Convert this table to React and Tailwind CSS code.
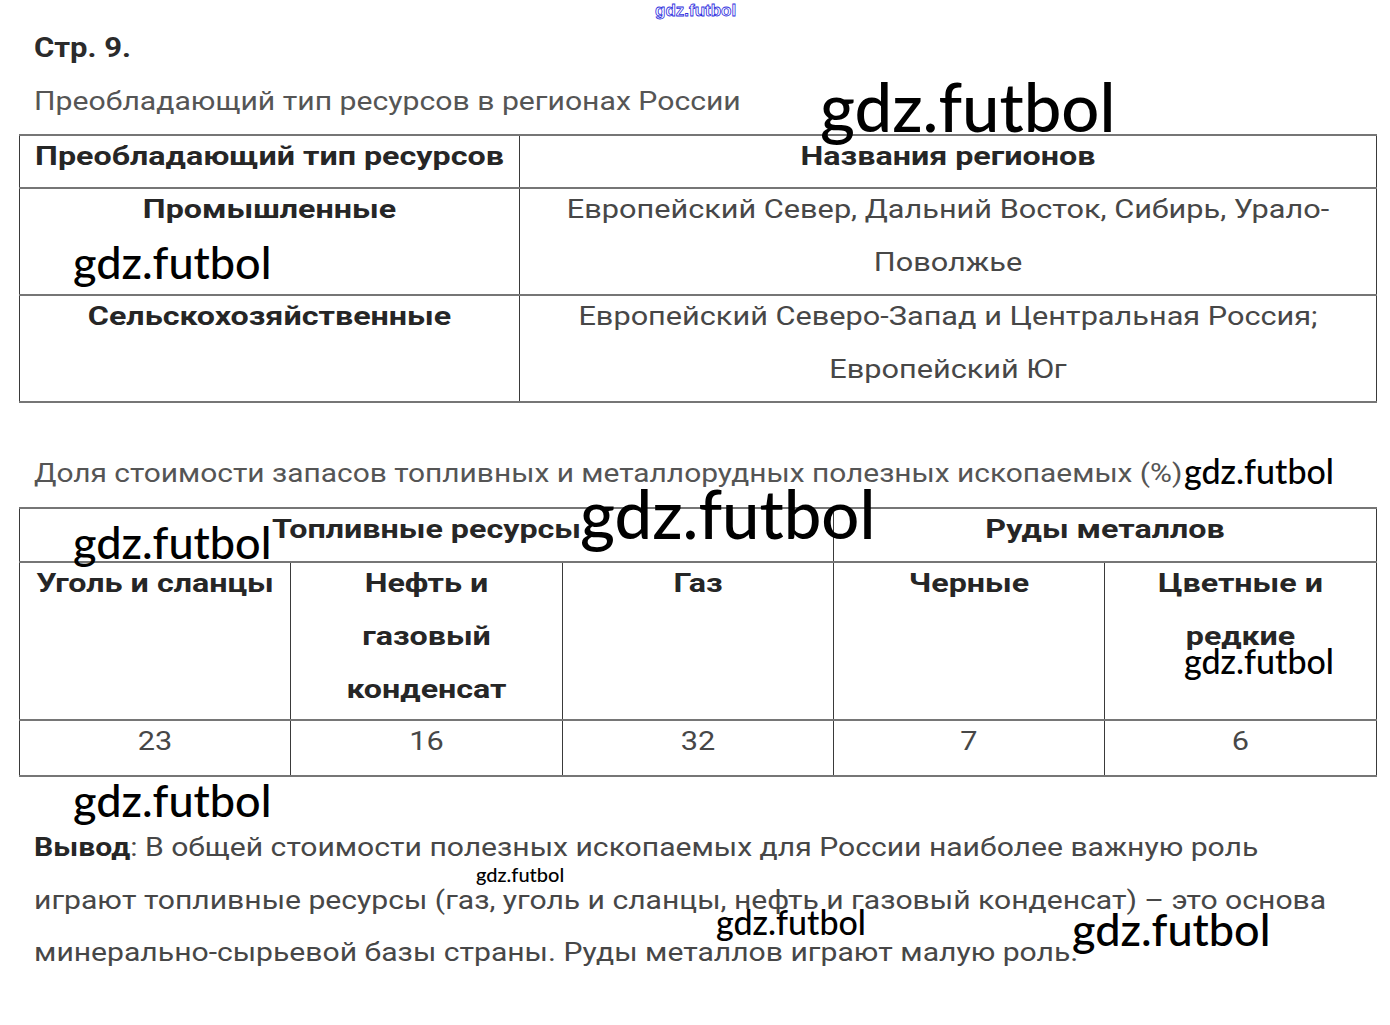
import React from 'react';

const td = 'border-x border-x-[#3a3a3a] border-y-2 border-y-[#767676] align-top text-center p-0';

function Mark({ className, children = 'gdz.futbol' }) {
  return (
    <span className={`absolute whitespace-nowrap font-['Lato'] font-medium leading-none text-black ${className}`}>
      {children}
    </span>
  );
}

function Cell({ children, bold, className = '', ...rest }) {
  return (
    <td className={`${td} ${className}`} {...rest}>
      <div
        className={`-mt-[6px] leading-[53px] ${
          bold ? 'scale-x-[1.24] font-bold text-[#262626]' : 'scale-x-[1.18] text-[#474747]'
        }`}
      >
        {children}
      </div>
    </td>
  );
}

export default function App() {
  return (
    <div className="relative w-[1390px] h-[1025px] overflow-hidden bg-white font-['Roboto',sans-serif] text-[26px] text-[#474747]">
      <div className="px-[19px] pt-[22px]">
        {/* заголовок */}
        <p className="origin-left scale-x-[1.15] pl-[13px] text-[27px] font-bold leading-[53px] text-[#2b2b2b]">Стр. 9.</p>
        <p className="origin-left scale-x-[1.16] pl-[13px] leading-[53px] text-[#555]">
          Преобладающий тип ресурсов в регионах России
        </p>

        <table className="mt-[6px] w-[1357px] table-fixed border-collapse">
          <colgroup>
            <col className="w-[500px]" />
            <col className="w-[857px]" />
          </colgroup>
          <tbody>
            <tr className="h-[53px]">
              <Cell bold>Преобладающий тип ресурсов</Cell>
              <Cell bold>Названия регионов</Cell>
            </tr>
            <tr className="h-[107px]">
              <Cell bold>Промышленные</Cell>
              <Cell>
                Европейский Север, Дальний Восток, Сибирь, Урало-
                <br />
                Поволжье
              </Cell>
            </tr>
            <tr className="h-[107px]">
              <Cell bold>Сельскохозяйственные</Cell>
              <Cell>
                Европейский Северо-Запад и Центральная Россия;
                <br />
                Европейский Юг
              </Cell>
            </tr>
          </tbody>
        </table>

        <p className="mt-[44px] origin-left scale-x-[1.15] pl-[13px] leading-[53px] text-[#555]">
          Доля стоимости запасов топливных и металлорудных полезных ископаемых (%)
        </p>

        <table className="mt-[7px] w-[1357px] table-fixed border-collapse">
          <colgroup>
            <col className="w-[271px]" />
            <col className="w-[272px]" />
            <col className="w-[271px]" />
            <col className="w-[271px]" />
            <col className="w-[272px]" />
          </colgroup>
          <tbody>
            <tr className="h-[54px]">
              <Cell bold colSpan={3}>Топливные ресурсы</Cell>
              <Cell bold colSpan={2}>Руды металлов</Cell>
            </tr>
            <tr className="h-[158px]">
              <Cell bold>Уголь и сланцы</Cell>
              <Cell bold>
                Нефть и
                <br />
                газовый
                <br />
                конденсат
              </Cell>
              <Cell bold>Газ</Cell>
              <Cell bold>Черные</Cell>
              <Cell bold>
                Цветные и
                <br />
                редкие
              </Cell>
            </tr>
            <tr className="h-[56px]">
              <Cell>23</Cell>
              <Cell>16</Cell>
              <Cell>32</Cell>
              <Cell>7</Cell>
              <Cell>6</Cell>
            </tr>
          </tbody>
        </table>

        <p className="mt-[44px] origin-left scale-x-[1.158] pl-[13px] leading-[52.5px]">
          <b className="text-[#262626]">Вывод</b>: В общей стоимости полезных ископаемых для России наиболее важную роль
          <br />
          играют топливные ресурсы (газ, уголь и сланцы, нефть и газовый конденсат) – это основа
          <br />
          минерально-сырьевой базы страны. Руды металлов играют малую роль.
        </p>
      </div>

      {/* водяные знаки поверх страницы */}
      <span className="absolute left-[655px] top-[2px] whitespace-nowrap font-['Liberation_Sans'] text-[17px] font-bold leading-none text-white [-webkit-text-stroke:0.8px_#2f2fe0]">
        gdz.futbol
      </span>
      <Mark className="left-[820px] top-[73px] text-[67px]" />
      <Mark className="left-[73px] top-[240px] text-[45px]" />
      <Mark className="left-[1184px] top-[454px] text-[34px]" />
      <Mark className="left-[580px] top-[480px] text-[67px]" />
      <Mark className="left-[73px] top-[520px] text-[45px]" />
      <Mark className="left-[1184px] top-[644px] text-[34px]" />
      <Mark className="left-[73px] top-[778px] text-[45px]" />
      <Mark className="left-[476px] top-[864px] text-[20px]" />
      <Mark className="left-[716px] top-[905px] text-[34px]" />
      <Mark className="left-[1072px] top-[907px] text-[45px]" />
    </div>
  );
}
